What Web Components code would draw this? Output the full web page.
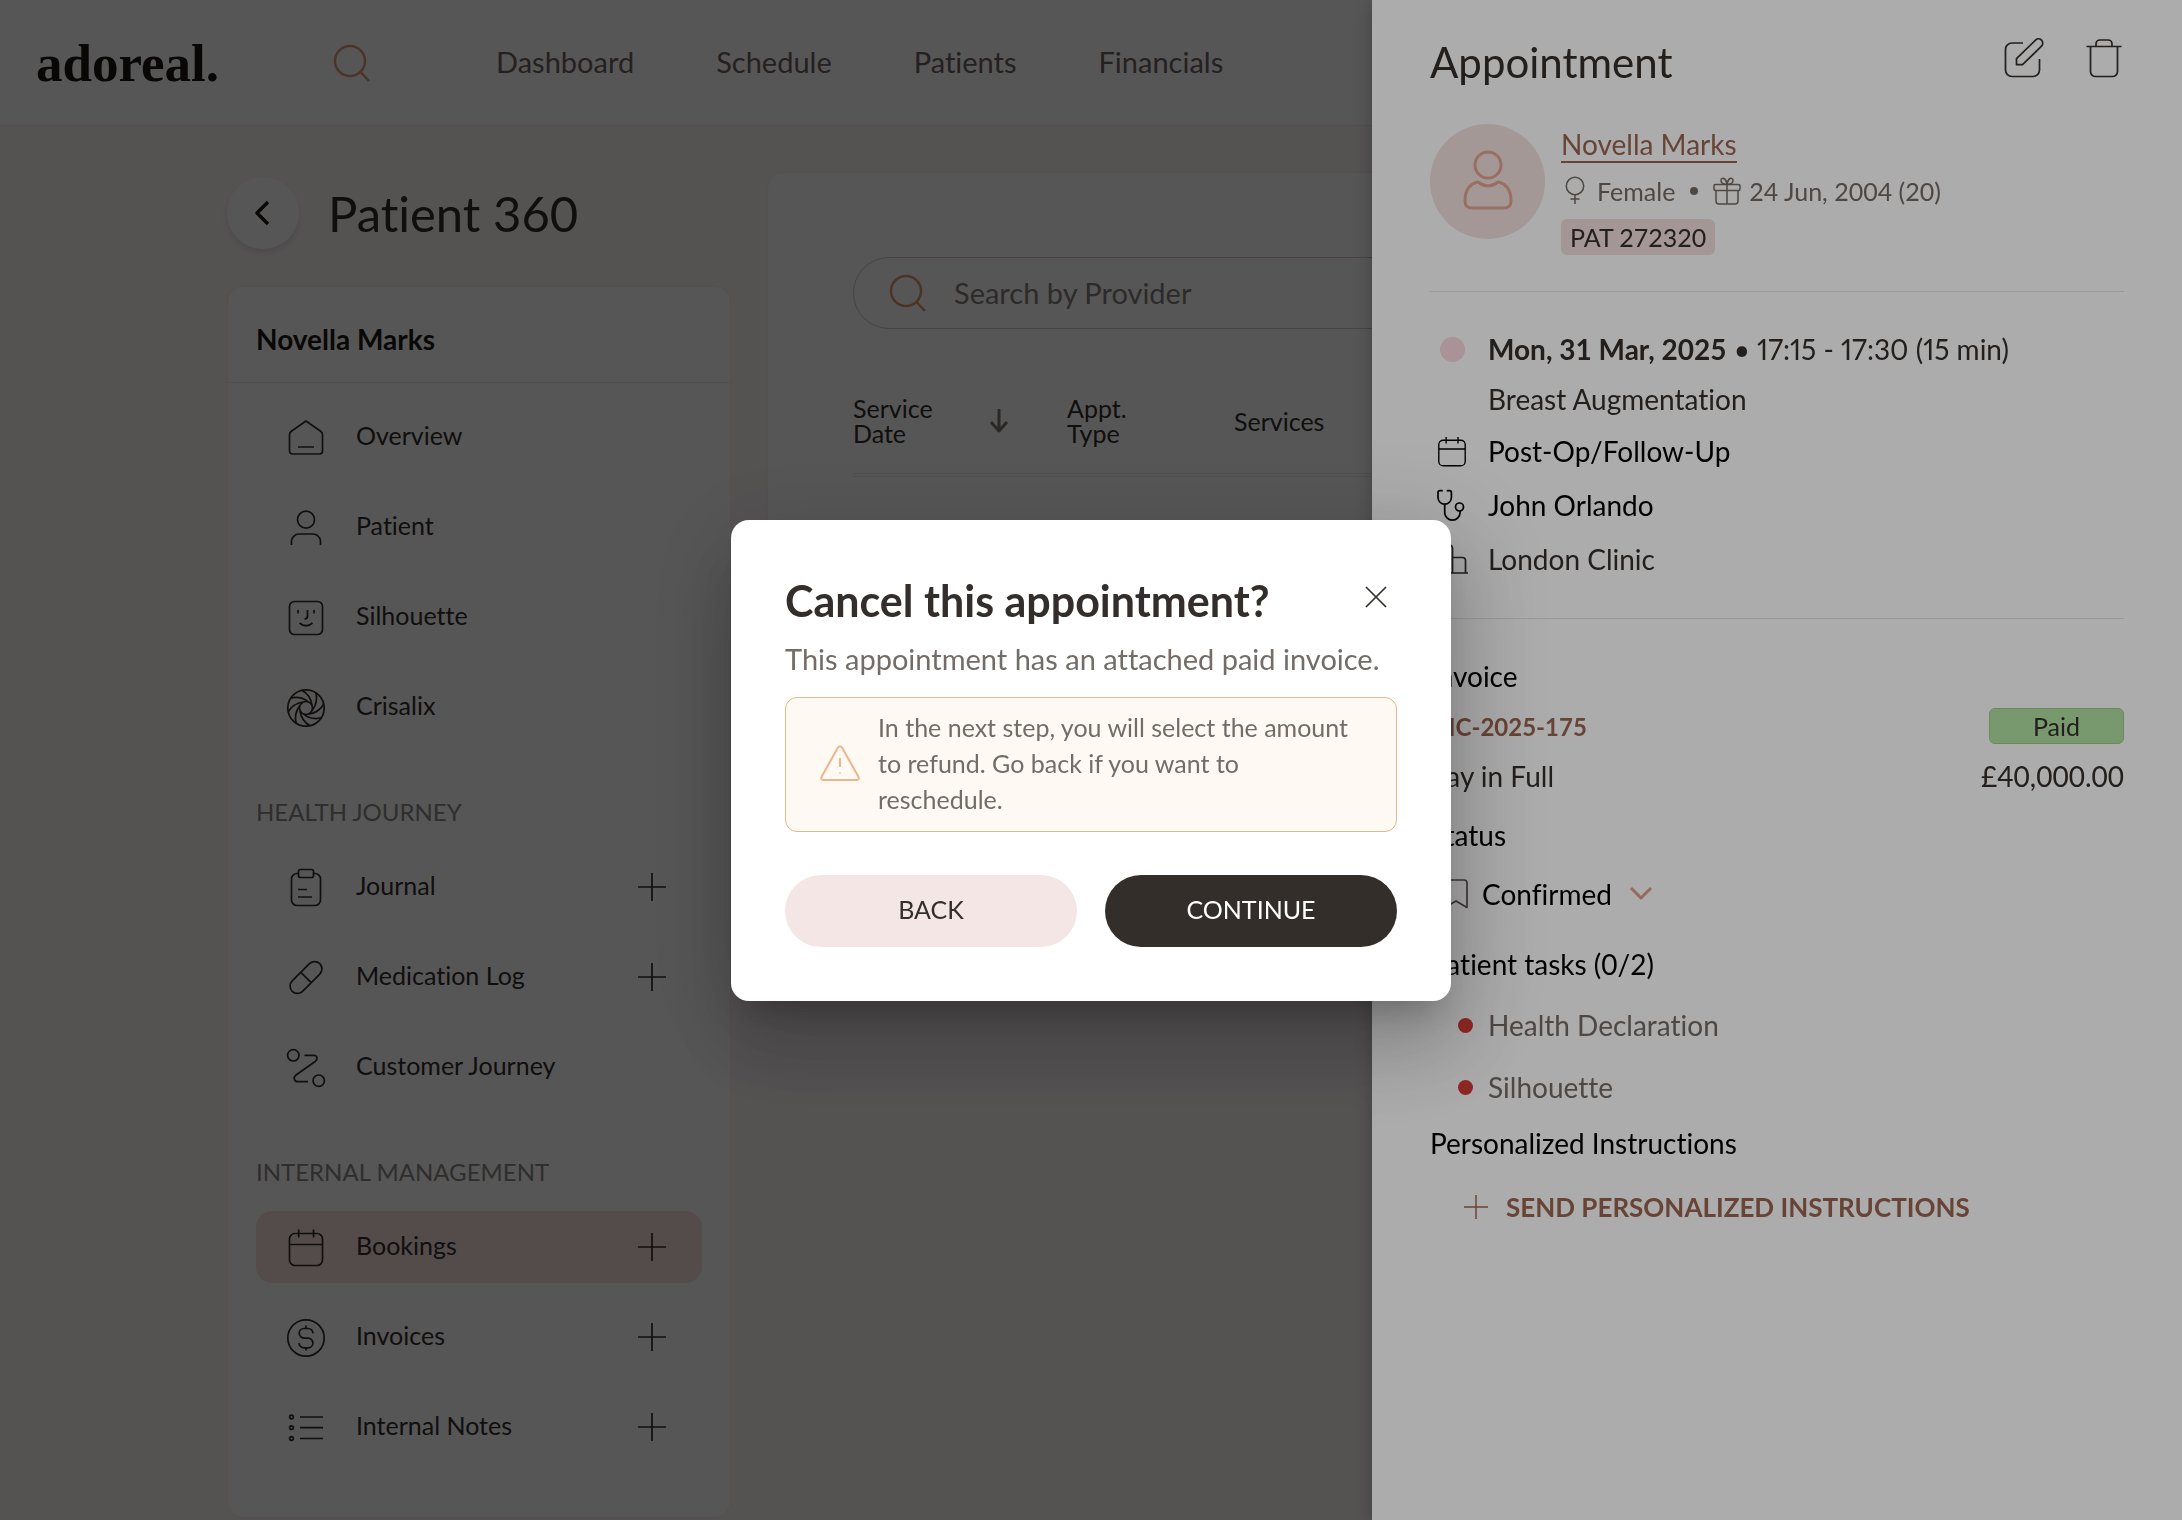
<!DOCTYPE html>
<html lang="en">
<head>
<meta charset="utf-8">
<title>Patient 360</title>
<style>
    body {
        margin: 0;
        min-height: 100vh;
        background-color: #fbf3f4;
        color: #332e2b;
        font-family: Lato, "Open Sans", sans-serif;
        font-size: 28px;
        font-variant-ligatures: none;
    }
</style>
</head>
<body>
<adoreal-header></adoreal-header>
<patient-page></patient-page>
<appointment-drawer></appointment-drawer>
<confirm-dialog heading="Cancel this appointment?">
    <span slot="text">This appointment has an attached paid invoice.</span>
    <span slot="warning">In the next step, you will select the amount to refund. Go back if you want to reschedule.</span>
</confirm-dialog>

<script>
// one blade of the shutter, repeated around the centre
let blades = "";
for (let i = 0; i < 8; i++) {
    blades += `<path transform="translate(20 21) rotate(${i * 45})" d="M-4 -17.8 Q4.5 -13 6 -3"/>`;
}

const icons = {
    search: ["0 0 40 40", `<circle cx="18" cy="18" r="15"/><path d="M28.5 29 L37 38"/>`],
    back: ["0 0 40 40", `<path d="M25 9 L14 20 L25 31"/>`],
    home: ["0 0 40 40", `<path d="M20 4 L35 14.5 Q36.5 15.7 36.5 18 V34 a3 3 0 0 1 -3 3 H6.500 a3 3 0 0 1 -3 -3 V18 Q3.500 15.700 5 14.500 Z M12 30 H28"/>`],
    person: ["0 0 40 40", `<circle cx="20" cy="12.700" r="8.500"/><path d="M5.500 38 v-4 a7.500 7.500 0 0 1 7.500 -7 h14 a7.500 7.500 0 0 1 7.500 7 v4"/>`],
    face: ["0 0 40 40", `<rect x="3.500" y="4.500" width="33" height="33" rx="5"/><path d="M12 13 v3.500 M28 13 v3.500 M21.500 13 v6 q0 3 -3 3 M13.500 26 q6.500 5.500 13 0"/>`],
    shutter: ["0 0 40 40", `<circle cx="20" cy="21" r="18.200"/><circle cx="20" cy="21" r="6.500"/>${blades}`],
    clipboard: ["0 0 40 40", `<path d="M12.500 6.500 H11 a5.500 5.500 0 0 0 -5.500 5.500 V33 a5.500 5.500 0 0 0 5.500 5.500 H29 a5.500 5.500 0 0 0 5.500 -5.500 V12 a5.500 5.500 0 0 0 -5.500 -5.500 H27.500 M12 22.500 H21 M12 30 H26"/><rect x="12.500" y="2.500" width="15" height="8" rx="2"/>`],
    pill: ["0 0 40 40", `<g transform="translate(20 20.500) rotate(-45)"><rect x="-19.500" y="-7.300" width="39" height="14.600" rx="7.300"/><path d="M0 -7 V7"/></g>`],
    route: ["0 0 40 40", `<circle cx="7.300" cy="8.300" r="5.700"/><circle cx="32.700" cy="33.700" r="5.700"/><path d="M18.500 8.300 H27.500 C31.500 8.300 32 12 29.500 14.200 L10 28 C7 30.500 8 34.500 11.500 34.700 H22"/>`],
    calendar: ["0 0 40 40", `<rect x="3.500" y="6.500" width="33" height="32" rx="5.500"/><path d="M12.700 2.500 V10.500 M27.500 2.500 V10.500 M3.500 17.500 H36.500"/>`],
    dollar: ["0 0 40 40", `<circle cx="20" cy="21" r="18.200"/><path d="M27 16.500 a5 5 0 0 0 -5 -5 h-4 a4.800 4.800 0 0 0 0 9.600 h4 a4.900 4.900 0 0 1 0 9.800 h-4 a5 5 0 0 1 -5 -5 M20 8.500 v3 M20 31 v2.500"/>`],
    list: ["0 0 40 40", `<circle cx="5.500" cy="10" r="1.800"/><circle cx="5.500" cy="20.700" r="1.800"/><circle cx="5.500" cy="31.500" r="1.800"/><path d="M14 10 H37 M14 20.700 H37 M14 31.500 H37"/>`],
    plus: ["0 0 28 28", `<path d="M14 0 V28 M0 14 H28"/>`],
    arrow: ["0 0 24 24", `<path d="M12 0 V22 M4 13 L12 22 L20 13"/>`],
    edit: ["0 0 40 40", `<path d="M19 5 H8 a6.500 6.500 0 0 0 -6.500 6.500 V32 a6.500 6.500 0 0 0 6.500 6.500 H29 a6.500 6.500 0 0 0 6.500 -6.500 V21"/><path d="M12.500 26.700 v-6 L31.500 2.200 a4 4 0 0 1 6 6 L18.500 26.700 z"/>`],
    trash: ["0 0 40 40", `<path d="M2.500 8.500 H37.500 M12 8.500 V6 a4 4 0 0 1 4 -4 h8 a4 4 0 0 1 4 4 V8.500 M6.500 8.500 V33.500 a5 5 0 0 0 5 5 H28.500 a5 5 0 0 0 5 -5 V8.500"/>`],
    avatar: ["0 0 60 68", `<circle cx="30" cy="17" r="13"/><path d="M20 34 C11 36 7 42 7 53 q0 7 7 7 h32 q7 0 7 -7 C53 42 49 36 40 34 Q30 42 20 34 Z"/>`],
    female: ["0 0 20 28", `<circle cx="10" cy="9" r="8.700"/><path d="M10 17.700 V27 M5.500 22 h9"/>`],
    gift: ["0 0 28 28", `<rect x="1" y="7.500" width="26" height="6" rx="1.500"/><path d="M3 13.500 V24 q0 3 3 3 h16 q3 0 3 -3 V13.500 M14 7.500 V27 M14 7.500 C6 7.500 7 0 11 1.500 Q13.500 3 14 7.500 Q14.500 3 17 1.500 C21 0 22 7.500 14 7.500"/>`],
    stethoscope: ["0 0 32 32", `<path d="M6 2.500 V1.700 H4 q-2 0 -2 2 V8.500 a6.700 6.700 0 0 0 13.400 0 V3.700 q0 -2 -2 -2 H11.500 V2.500 M8.700 15.200 V23.500 a7.700 7.700 0 0 0 15.400 0 V22"/><circle cx="23.500" cy="18" r="4"/>`],
    building: ["0 0 32 32", `<path d="M0 30 H32 M3 30 V5 q0 -3 3 -3 h7 q3.500 0 3.500 3.500 V30 M16.500 14.500 H26.500 q3 0 3 3 V30"/>`],
    bookmark: ["0 0 24 30", `<path d="M1 4 q0 -3 3 -3 h16 q3 0 3 3 V28.500 L12 22 L1 28.500 Z"/>`],
    chevron: ["0 0 24 14", `<path d="M2 1 L12 11 L22 1"/>`],
    close: ["0 0 22 22", `<path d="M1 1 L21 21 M21 1 L1 21"/>`],
    warning: ["0 0 40 36", `<path d="M18 2.500 Q20 0 22 2.500 L38.500 32 Q39.500 35 36.500 35 H3.500 Q0.500 35 1.500 32 Z M20 13 V22 M20 27.500 V28.500"/>`]
};

class AdIcon extends HTMLElement {
    constructor () {
        super ();
        this.attachShadow ({mode: "open"});
    }

    connectedCallback () {
        const [box, shapes] = icons[this.getAttribute ("name")];
        this.shadowRoot.innerHTML = `
<style>
    :host {
        display: block;
        flex: none;
        width: var(--icon-width, 40px);
        height: var(--icon-height, var(--icon-width, 40px));
    }

    svg {
        display: block;
        width: 100%;
        height: 100%;
        overflow: visible;
        fill: none;
        stroke: currentColor;
        stroke-width: var(--icon-stroke, 1.7);
        stroke-linejoin: round;
    }
</style>
<svg viewBox="${box}" aria-hidden="true">${shapes}</svg>`;
    }
}
customElements.define ("ad-icon", AdIcon);


class AdorealHeader extends HTMLElement {
    constructor () {
        super ();
        this.attachShadow ({mode: "open"});
        this.shadowRoot.innerHTML = `
<style>
    :host {
        display: flex;
        align-items: center;
        box-sizing: border-box;
        height: 126px;
        padding: 0 36px;
        background-color: white;
        border-bottom: 1px solid #f4e6e4;
    }

    .logo {
        width: 296px;
        color: #1c1614;
        font: bold 53px "Liberation Serif", serif;
        text-decoration: none;
    }

    button {
        padding: 0;
        border: 0;
        background: none;
        color: #dd9a7c;
        --icon-stroke: 2.5;
    }

    nav {
        display: flex;
        gap: 82px;
        margin-left: 124px;
        padding-bottom: 3px;
        font-size: 29px;
    }

    nav a {
        color: #6d6260;
        text-decoration: none;
    }
</style>
<a class="logo" href="#">adoreal.</a>
<button type="button" aria-label="Search"><ad-icon name="search"></ad-icon></button>
<nav>
    <a href="#">Dashboard</a>
    <a href="#">Schedule</a>
    <a href="#">Patients</a>
    <a href="#">Financials</a>
</nav>`;
    }
}
customElements.define ("adoreal-header", AdorealHeader);


class NavItem extends HTMLElement {
    constructor () {
        super ();
        this.attachShadow ({mode: "open"});
    }

    connectedCallback () {
        this.shadowRoot.innerHTML = `
<style>
    :host {
        display: flex;
        align-items: center;
        height: 72px;
        padding: 0 36px 0 30px;
        border-radius: 16px;
        color: #332e2b;
        font-size: 25px;
    }

    :host([active]) {
        background-color: #f8e2df;
    }

    a {
        display: flex;
        flex: 1;
        align-items: center;
        gap: 30px;
        color: inherit;
        text-decoration: none;
    }

    span {
        padding-bottom: 4px;
    }

    button {
        padding: 0;
        border: 0;
        background: none;
        color: inherit;
        --icon-width: 28px;
    }
</style>
<a href="#"><ad-icon name="${this.getAttribute ("icon")}"></ad-icon><span><slot></slot></span></a>
${this.hasAttribute ("add") ? `<button type="button" aria-label="Add"><ad-icon name="plus"></ad-icon></button>` : ""}`;
    }
}
customElements.define ("nav-item", NavItem);


class PatientMenu extends HTMLElement {
    constructor () {
        super ();
        this.attachShadow ({mode: "open"});
        this.shadowRoot.innerHTML = `
<style>
    :host {
        display: block;
        padding-bottom: 54px;
        background-color: white;
        border: 1px solid #f7eceb;
        border-radius: 16px;
    }

    h2 {
        margin: 0;
        padding: 34px 28px 25px;
        border-bottom: 1px solid #ece8e7;
        color: #1c1816;
        font-size: 28px;
        line-height: 36px;
    }

    nav {
        display: flex;
        flex-direction: column;
        gap: 18px;
        padding: 18px 28px 0;
    }

    h3 {
        margin: 34px 0 4px;
        color: #8d8987;
        font-size: 24px;
        font-weight: normal;
        line-height: 34px;
    }
</style>
<h2>Novella Marks</h2>
<nav>
    <nav-item icon="home">Overview</nav-item>
    <nav-item icon="person">Patient</nav-item>
    <nav-item icon="face">Silhouette</nav-item>
    <nav-item icon="shutter">Crisalix</nav-item>
    <h3>HEALTH JOURNEY</h3>
    <nav-item icon="clipboard" add>Journal</nav-item>
    <nav-item icon="pill" add>Medication Log</nav-item>
    <nav-item icon="route">Customer Journey</nav-item>
    <h3>INTERNAL MANAGEMENT</h3>
    <nav-item icon="calendar" add active>Bookings</nav-item>
    <nav-item icon="dollar" add>Invoices</nav-item>
    <nav-item icon="list" add>Internal Notes</nav-item>
</nav>`;
    }
}
customElements.define ("patient-menu", PatientMenu);


class BookingsCard extends HTMLElement {
    constructor () {
        super ();
        this.attachShadow ({mode: "open"});
        this.shadowRoot.innerHTML = `
<style>
    :host {
        display: block;
        box-sizing: border-box;
        min-height: 560px;
        padding: 84px 85px;
        background-color: white;
        border: 1px solid #f7eceb;
        border-radius: 16px;
    }

    .search {
        display: flex;
        align-items: center;
        gap: 26px;
        box-sizing: border-box;
        height: 72px;
        padding: 0 34px;
        border: 1px solid #d9c4c1;
        border-radius: 36px;
        color: #dd9a6c;
        --icon-stroke: 2.5;
    }

    input {
        flex: 1;
        min-width: 0;
        padding: 0 0 2px;
        border: 0;
        outline: 0;
        background: none;
        font: inherit;
        font-size: 29px;
    }

    input::placeholder {
        color: #85807e;
        opacity: 1;
    }

    table {
        width: 100%;
        margin-top: 54px;
        border-collapse: collapse;
        table-layout: fixed;
    }

    th {
        height: 76px;
        padding: 0 0 14px;
        border-bottom: 4px double #eeebea;
        color: #332e2b;
        font-size: 25px;
        font-weight: normal;
        line-height: 25px;
        text-align: left;
    }

    .sort {
        display: flex;
        align-items: center;
        justify-content: space-between;
        width: 158px;
        --icon-width: 24px;
        --icon-stroke: 3;
    }

    .sort ad-icon {
        color: #7d7977;
    }
</style>
<div class="search">
    <ad-icon name="search"></ad-icon>
    <input type="search" aria-label="Search by Provider" placeholder="Search by Provider">
</div>
<table>
    <colgroup><col style="width: 214px"><col style="width: 167px"><col></colgroup>
    <thead>
        <tr>
            <th><div class="sort"><span>Service<br>Date</span><ad-icon name="arrow"></ad-icon></div></th>
            <th>Appt.<br>Type</th>
            <th>Services</th>
        </tr>
    </thead>
</table>`;
    }
}
customElements.define ("bookings-card", BookingsCard);


class PatientPage extends HTMLElement {
    constructor () {
        super ();
        this.attachShadow ({mode: "open"});
        this.shadowRoot.innerHTML = `
<style>
    :host {
        display: grid;
        grid-template-columns: 504px 1fr;
        gap: 36px;
        padding: 46px 227px 0;
    }

    .title {
        display: flex;
        align-items: center;
        gap: 29px;
        margin: 5px 0 37px;
    }

    button {
        display: grid;
        place-items: center;
        width: 72px;
        height: 72px;
        padding: 0;
        border: 0;
        border-radius: 50%;
        background-color: white;
        box-shadow: 0 4px 6px rgba(0, 0, 0, .1);
        color: #1c1816;
        --icon-stroke: 3.5;
    }

    h1 {
        margin: 0;
        color: #332e2b;
        font-size: 49px;
        font-weight: normal;
        line-height: 70px;
    }

    bookings-card {
        align-self: start;
    }
</style>
<div>
    <div class="title">
        <button type="button" aria-label="Back"><ad-icon name="back"></ad-icon></button>
        <h1>Patient 360</h1>
    </div>
    <patient-menu></patient-menu>
</div>
<bookings-card></bookings-card>`;
    }
}
customElements.define ("patient-page", PatientPage);


// line with an icon column on its left
class DetailRow extends HTMLElement {
    constructor () {
        super ();
        this.attachShadow ({mode: "open"});
        this.shadowRoot.innerHTML = `
<style>
    :host {
        display: grid;
        grid-template-columns: 44px 1fr;
        column-gap: 14px;
        align-items: center;
        height: 54px;
        --icon-width: 32px;
    }

    .icon {
        display: grid;
        place-items: center;
    }
</style>
<div class="icon"><slot name="icon"></slot></div>
<div><slot></slot></div>`;
    }
}
customElements.define ("detail-row", DetailRow);


class AppointmentDrawer extends HTMLElement {
    constructor () {
        super ();
        this.attachShadow ({mode: "open"});
        this.shadowRoot.innerHTML = `
<style>
    :host {
        position: fixed;
        inset: 0;
        display: flex;
        justify-content: flex-end;
        background-color: rgba(0, 0, 0, .5);
    }

    aside {
        box-sizing: border-box;
        width: 810px;
        padding: 32px 58px;
        background-color: white;
        box-shadow: 0 4px 18px rgba(0, 0, 0, .25);
    }

    header, .person, .meta, .line, .status, .send {
        display: flex;
        align-items: center;
    }

    header {
        justify-content: space-between;
    }

    h2 {
        margin: 0;
        font-size: 42px;
        font-weight: normal;
        line-height: 60px;
    }

    button {
        padding: 0;
        border: 0;
        background: none;
        color: inherit;
        font: inherit;
    }

    .tools {
        display: flex;
        gap: 40px;
        margin-bottom: 8px;
    }

    .person {
        align-items: flex-start;
        gap: 16px;
        padding: 32px 0 36px;
    }

    .avatar {
        display: grid;
        place-items: center;
        width: 115px;
        height: 115px;
        border-radius: 50%;
        background-color: #f4e1de;
        color: #e2a592;
        --icon-width: 60px;
        --icon-height: 68px;
        --icon-stroke: 3;
    }

    .about {
        display: flex;
        flex-direction: column;
        align-items: flex-start;
        padding-top: 3px;
    }

    .name {
        color: #9b6650;
        line-height: 34px;
        text-decoration: none;
        border-bottom: 2px solid;
    }

    .meta {
        height: 56px;
        padding-left: 4px;
        color: #746b67;
        font-size: 25px;
        --icon-width: 28px;
        --icon-stroke: 1.5;
    }

    .meta .female {
        --icon-width: 20px;
        --icon-height: 28px;
        margin-right: 12px;
    }

    .dot {
        width: 8px;
        height: 8px;
        margin: 0 15px;
        border-radius: 50%;
        background-color: currentColor;
    }

    .gift {
        margin-right: 8px;
    }

    .tag {
        padding: 0 9px;
        border-radius: 6px;
        background-color: #f3dfdc;
        font-size: 25px;
        line-height: 36px;
    }

    section {
        padding: 32px 0;
        border-top: 1px solid #e6e2e1;
    }

    .short {
        height: 50px;
    }

    .color {
        width: 25px;
        height: 25px;
        border-radius: 50%;
        background-color: #fbd9e2;
    }

    .time {
        font-variant-numeric: proportional-nums;
    }

    .black, h3, .status {
        color: black;
    }

    h3, .heading {
        display: block;
        margin: 0;
        color: black;
        font-size: 28px;
        font-weight: normal;
        line-height: 50px;
    }

    .line {
        justify-content: space-between;
        height: 50px;
    }

    .line a {
        color: #9b6650;
        font-size: 24px;
        font-weight: bold;
        text-decoration: none;
    }

    .paid {
        box-sizing: border-box;
        width: 135px;
        border: 1px solid #9ccb8c;
        border-radius: 6px;
        background-color: #b3e3a2;
        font-size: 25px;
        line-height: 34px;
        text-align: center;
    }

    .heading {
        margin-top: 9px;
    }

    .status {
        height: 50px;
        margin: 9px 0 20px;
        padding-left: 14px;
        --icon-width: 24px;
        --icon-height: 30px;
    }

    .bookmark {
        color: #5c5552;
    }

    select {
        margin: 0 17px 0 14px;
        padding: 0;
        appearance: none;
        border: 0;
        background: none;
        color: inherit;
        font: inherit;
    }

    .chevron {
        color: #dd9f8b;
        --icon-height: 14px;
        --icon-stroke: 3;
    }

    ul {
        margin: 5px 0 0;
        padding: 0;
        color: #746b67;
        list-style: none;
    }

    li {
        display: flex;
        align-items: center;
        gap: 15px;
        height: 62px;
        padding-left: 28px;
    }

    li::before {
        content: "";
        width: 15px;
        height: 15px;
        border-radius: 50%;
        background-color: #d63c37;
    }

    .send {
        gap: 18px;
        margin-top: 14px;
        padding-left: 34px;
        color: #9b6650;
        font-size: 26px;
        font-weight: bold;
        line-height: 50px;
        --icon-width: 24px;
    }
</style>
<aside>
    <header>
        <h2>Appointment</h2>
        <div class="tools">
            <button type="button" aria-label="Edit"><ad-icon name="edit"></ad-icon></button>
            <button type="button" aria-label="Delete"><ad-icon name="trash"></ad-icon></button>
        </div>
    </header>
    <div class="person">
        <div class="avatar"><ad-icon name="avatar"></ad-icon></div>
        <div class="about">
            <a class="name" href="#">Novella Marks</a>
            <div class="meta">
                <ad-icon class="female" name="female"></ad-icon>
                <span>Female</span>
                <i class="dot"></i>
                <ad-icon class="gift" name="gift"></ad-icon>
                <span>24 Jun, 2004 (20)</span>
            </div>
            <span class="tag">PAT 272320</span>
        </div>
    </div>
    <section>
        <detail-row class="short"><i class="color" slot="icon"></i><b>Mon, 31 Mar, 2025</b> <span class="time">• 17:15 - 17:30 (15 min)</span></detail-row>
        <detail-row class="short">Breast Augmentation</detail-row>
        <detail-row class="black"><ad-icon slot="icon" name="calendar"></ad-icon>Post-Op/Follow-Up</detail-row>
        <detail-row class="black"><ad-icon slot="icon" name="stethoscope"></ad-icon>John Orlando</detail-row>
        <detail-row><ad-icon slot="icon" name="building"></ad-icon>London Clinic</detail-row>
    </section>
    <section>
        <h3>Invoice</h3>
        <div class="line"><a href="#">INC-2025-175</a><span class="paid">Paid</span></div>
        <div class="line"><span>Pay in Full</span><span>£40,000.00</span></div>
        <label class="heading" for="status">Status</label>
        <div class="status">
            <ad-icon class="bookmark" name="bookmark"></ad-icon>
            <select id="status"><option>Confirmed</option></select>
            <ad-icon class="chevron" name="chevron"></ad-icon>
        </div>
        <h3>Patient tasks (0/2)</h3>
        <ul>
            <li>Health Declaration</li>
            <li>Silhouette</li>
        </ul>
        <h3>Personalized Instructions</h3>
        <button class="send" type="button"><ad-icon name="plus"></ad-icon>SEND PERSONALIZED INSTRUCTIONS</button>
    </section>
</aside>`;
    }
}
customElements.define ("appointment-drawer", AppointmentDrawer);


class ConfirmDialog extends HTMLElement {
    constructor () {
        super ();
        this.attachShadow ({mode: "open"});
    }

    connectedCallback () {
        this.shadowRoot.innerHTML = `
<style>
    :host {
        position: fixed;
        inset: 0;
        display: grid;
        place-items: center;
        background-color: rgba(0, 0, 0, .325);
    }

    .dialog {
        box-sizing: border-box;
        width: 720px;
        padding: 54px;
        background-color: white;
        border-radius: 18px;
        box-shadow: 0 22px 30px -14px rgba(0, 0, 0, .2), 0 48px 76px 6px rgba(0, 0, 0, .14), 0 18px 92px 16px rgba(0, 0, 0, .12);
    }

    header {
        display: flex;
        align-items: center;
        justify-content: space-between;
    }

    h2 {
        margin: 0;
        font-size: 43px;
        line-height: 54px;
    }

    button {
        padding: 0;
        border: 0;
        font: inherit;
    }

    .close {
        margin: 0 10px 8px;
        background: none;
        color: #332e2b;
        --icon-width: 22px;
    }

    p {
        margin: 13px 0 20px;
        color: #736c68;
        font-size: 29px;
        line-height: 36px;
    }

    .warning {
        display: flex;
        align-items: center;
        gap: 18px;
        padding: 11px 34px 14px;
        border: 1px solid #e5b78c;
        border-radius: 12px;
        background-color: #fef9f3;
        color: #736c68;
        font-size: 25px;
        line-height: 36px;
    }

    .warning ad-icon {
        color: #ecb58d;
        --icon-height: 36px;
        --icon-stroke: 2;
    }

    .actions {
        display: grid;
        grid-template-columns: 1fr 1fr;
        gap: 28px;
        margin-top: 43px;
    }

    .actions button {
        height: 72px;
        padding-bottom: 4px;
        border-radius: 36px;
        background-color: #f4e6e4;
        color: #332e2b;
        font-size: 25px;
    }

    .actions .primary {
        background-color: #332e2a;
        color: white;
    }
</style>
<div class="dialog" role="dialog" aria-modal="true" aria-labelledby="heading">
    <header>
        <h2 id="heading">${this.getAttribute ("heading")}</h2>
        <button class="close" type="button" aria-label="Close"><ad-icon name="close"></ad-icon></button>
    </header>
    <p><slot name="text"></slot></p>
    <div class="warning">
        <ad-icon name="warning"></ad-icon>
        <slot name="warning"></slot>
    </div>
    <div class="actions">
        <button type="button">BACK</button>
        <button class="primary" type="button">CONTINUE</button>
    </div>
</div>`;
    }
}
customElements.define ("confirm-dialog", ConfirmDialog);
</script>
</body>
</html>
